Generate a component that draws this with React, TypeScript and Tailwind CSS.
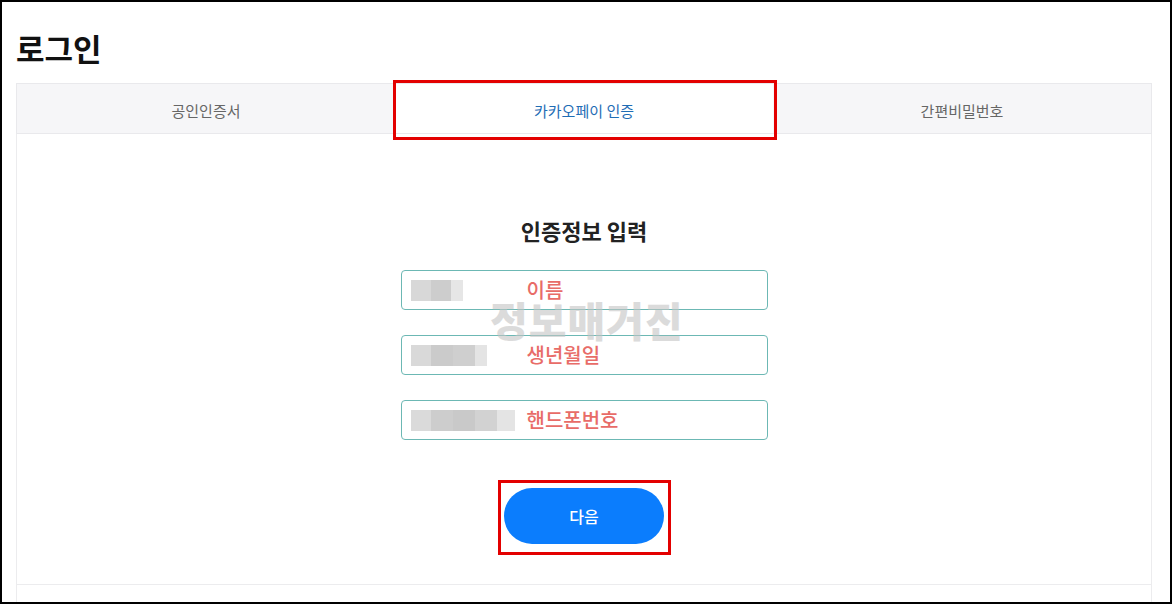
import React from "react";

const Blocks = ({ widths }: { widths: { w: number; c: string }[] }) => (
  <div className="flex h-[21px] w-[116px]">
    {widths.map((b, i) => (
      <div key={i} className="h-full" style={{ width: b.w, background: b.c }} />
    ))}
  </div>
);

export default function App() {
  const fields = [
    {
      label: "이름",
      blocks: [
        { w: 20, c: "#d8d8d8" },
        { w: 20, c: "#cdcdcd" },
        { w: 12, c: "#e6e6e6" },
      ],
    },
    {
      label: "생년월일",
      blocks: [
        { w: 20, c: "#d9d9d9" },
        { w: 22, c: "#cbcbcb" },
        { w: 22, c: "#cfcfcf" },
        { w: 12, c: "#e4e4e4" },
      ],
    },
    {
      label: "핸드폰번호",
      blocks: [
        { w: 20, c: "#dadada" },
        { w: 22, c: "#cdcdcd" },
        { w: 22, c: "#c9c9c9" },
        { w: 22, c: "#d2d2d2" },
        { w: 18, c: "#e4e4e4" },
      ],
    },
  ];

  return (
    <div className="relative w-[1172px] h-[604px] overflow-hidden border-2 border-black bg-white font-['Noto_Sans_CJK_KR','Noto_Sans',sans-serif]">
      <div className="pl-[14px] pr-[18px]">
        <h1 className="pt-[26px] h-[81px] text-[31px] font-bold leading-[40px] text-[#111]">로그인</h1>
        <div className="flex h-[51px] border border-[#e9e9ec] bg-[#f6f6f8]">
          <div className="flex flex-1 items-center justify-center pt-[6px] text-[15px] text-[#666]">공인인증서</div>
          <div className="flex flex-1 items-center justify-center bg-white pt-[6px] text-[15px] text-[#1f6db5]">카카오페이 인증</div>
          <div className="flex flex-1 items-center justify-center pt-[6px] text-[15px] text-[#666]">간편비밀번호</div>
        </div>
        <div className="h-[451px] border-x border-b border-[#ececee] flex flex-col items-center">
          <h2 className="mt-[80px] text-[22px] font-bold leading-[32px] text-[#222]">인증정보 입력</h2>
          <div className="mt-[24px] flex w-[367px] flex-col gap-[25px]">
            {fields.map((f) => (
              <div key={f.label} className="flex h-[40px] items-center rounded-[4px] border border-[#6cb8b4] pl-[9px]">
                <Blocks widths={f.blocks} />
                <span className="text-[20px] font-medium leading-[24px] text-[#e86c68]">{f.label}</span>
              </div>
            ))}
          </div>
          <button className="mt-[48px] h-[56px] w-[160px] rounded-full bg-[#0b7dfd] text-[16px] font-medium text-white">다음</button>
        </div>
        <div className="h-[20px] border-x border-[#ececee]" />
      </div>

      <div className="pointer-events-none absolute left-[488px] top-[293px] text-[41px] font-black leading-[48px] tracking-[1px] text-[#c4c4c4] opacity-60">
        정보매거진
      </div>
      <div className="pointer-events-none absolute left-[391px] top-[78px] h-[60px] w-[384px] border-[3px] border-[#e30000]" />
      <div className="pointer-events-none absolute left-[496px] top-[478px] h-[75px] w-[173px] border-[3px] border-[#e30000]" />
    </div>
  );
}
